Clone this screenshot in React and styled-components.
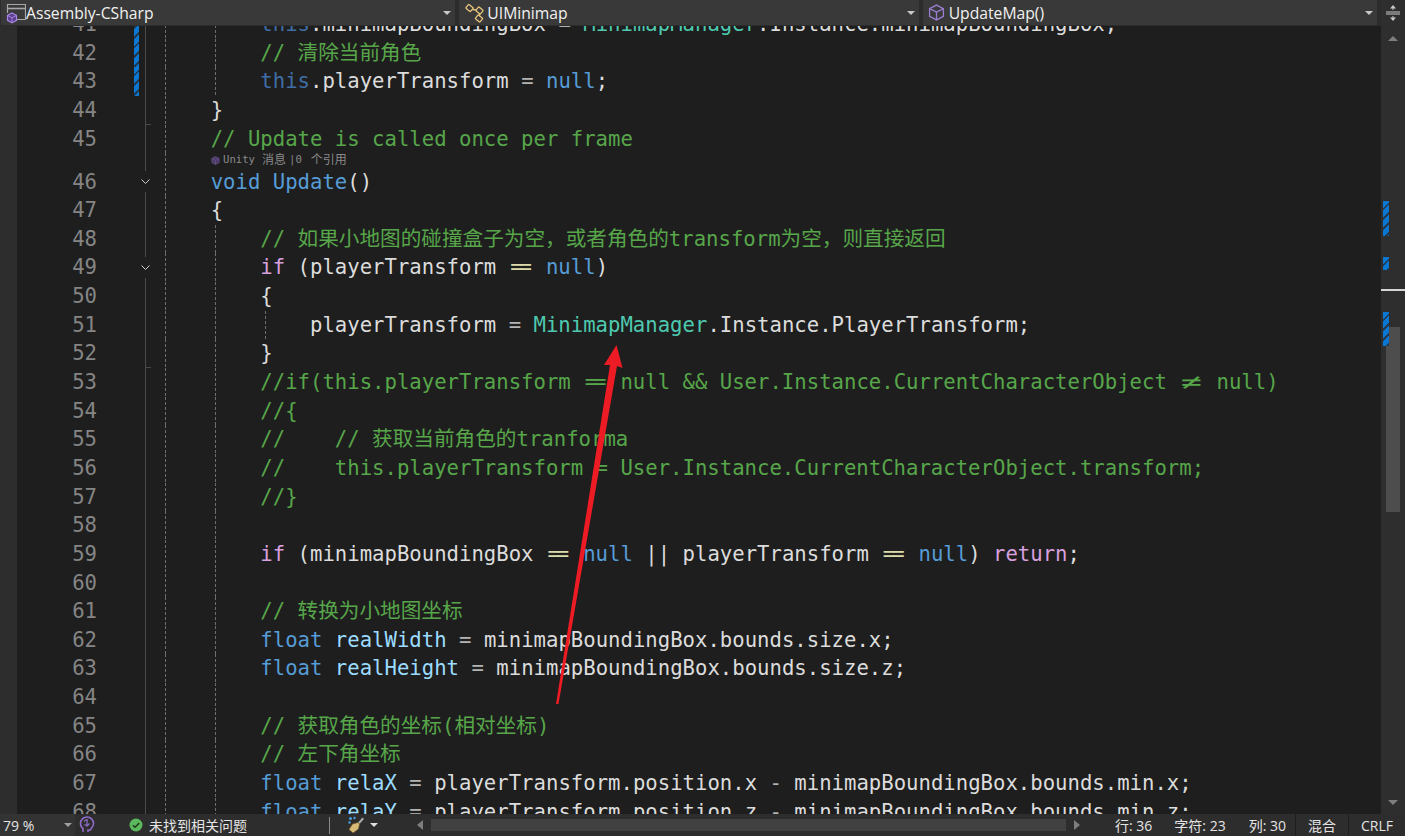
import styled, { createGlobalStyle } from "styled-components";

const GlobalStyle = createGlobalStyle`
  html, body {
    margin: 0;
    height: 100%;
    overflow: hidden;
    background: #1e1e1e;
  }
`;

const uiFont = `"Open Sans", "Noto Sans CJK SC", sans-serif`;
const codeFont = `"DejaVu Sans Mono", "Noto Sans CJK SC", monospace`;

const hatch = `repeating-linear-gradient(135deg, #0a78d2 0 5px, #1f3a52 5px 7px)`;

const tokenColors = {
  kw: "#569cd6",
  ctl: "#d8a0df",
  type: "#4ec9b0",
  local: "#9cdcfe",
  com: "#57a64a",
  fade: "#3f6ea6",
  op: "#b4b4b4",
  eq: "#dcdcaa",
  txt: "#dcdcdc",
  fn: "#569cd6",
};

const Page = styled.div`
  position: relative;
  display: flex;
  flex-direction: column;
  width: 100%;
  height: 100vh;
  background: #1e1e1e;
  color: #dcdcdc;
  font-family: ${uiFont};
`;

const TopBar = styled.div`
  display: flex;
  flex: none;
  height: 26px;
  gap: 4px;
  padding-left: 1px;
  background: #2c2c2c;
  box-sizing: border-box;
  border-bottom: 1px solid #2c2c2c;
`;

const Combo = styled.div`
  display: flex;
  align-items: center;
  width: ${({ $w }) => $w}px;
  gap: ${({ $gap }) => $gap}px;
  padding: 0 4px 0 ${({ $pl }) => $pl}px;
  box-sizing: border-box;
  background: #393939;
  font-size: 15.7px;
  color: #f1f1f1;
`;

const ComboLabel = styled.span`
  flex: 1;
  white-space: nowrap;
`;

const Caret = styled.span`
  flex: none;
  width: 0;
  height: 0;
  border-left: 4px solid transparent;
  border-right: 4px solid transparent;
  border-top: 4px solid ${({ $c }) => $c || "#c8c8c8"};
`;

const SplitBox = styled.div`
  flex: none;
  display: flex;
  align-items: center;
  justify-content: center;
  width: 24px;
  margin-left: auto;
  background: #2e2e2e;
`;

const Main = styled.div`
  flex: 1;
  min-height: 0;
  display: flex;
`;

const Editor = styled.div`
  flex: 1;
  min-width: 0;
  overflow: hidden;
`;

const Lines = styled.div`
  margin-top: -16px;
  font-family: ${codeFont};
  font-size: 20.63px;
  font-variant-ligatures: none;
`;

const Row = styled.div`
  display: grid;
  grid-template-columns: 17px 80px 37px 5px 22px 1fr;
  height: ${({ $lens }) => ($lens ? "14.35px" : "28.65px")};
  line-height: ${({ $lens }) => ($lens ? "14.35px" : "28.65px")};
`;

const GlyphMargin = styled.div`
  background: #2d2d2d;
`;

const LineNo = styled.div`
  text-align: right;
  color: #858585;
`;

const Spacer = styled.div``;

const ChangeBar = styled.div`
  background: ${({ $on }) => ($on ? hatch : "transparent")};
`;

const Outline = styled.div`
  position: relative;
  display: flex;
  align-items: center;

  &::before {
    content: "";
    position: absolute;
    left: 6px;
    top: 0;
    bottom: 0;
    width: 1px;
    background: #4a4a4a;
  }

  &::after {
    content: "";
    display: ${({ $end }) => ($end ? "block" : "none")};
    position: absolute;
    left: 6px;
    bottom: 0;
    width: 6px;
    height: 1px;
    background: #4a4a4a;
  }
`;

const Fold = styled.svg`
  position: relative;
  margin-left: 1px;
  padding: 4px 0;
  background: #1e1e1e;
`;

const Code = styled.div`
  position: relative;
  white-space: pre;
`;

const Guide = styled.span`
  position: absolute;
  left: ${({ $level }) => 4 + $level * 50}px;
  top: 0;
  bottom: 0;
  width: 1px;
  background: repeating-linear-gradient(to bottom, #6e6e6e 0 3px, transparent 3px 5px);
`;

const T = styled.span`
  color: ${({ $k }) => tokenColors[$k]};
`;

const LongEq = styled.span`
  display: inline-block;
  width: 24.84px;
  text-align: center;
  letter-spacing: -3px;
  text-indent: -3px;
  color: ${({ $k }) => tokenColors[$k]};
`;

const NotEq = styled.span`
  display: inline-block;
  width: 24.84px;
  text-align: center;
  transform: scaleX(1.7);
  color: ${({ $k }) => tokenColors[$k]};
`;

const Lens = styled.div`
  display: flex;
  align-items: center;
  height: 100%;
  padding-left: 50px;
  font-size: 10.65px;
  color: #8a8a8a;
`;

const LensText = styled.span`
  margin-left: ${({ $ml }) => $ml}px;
  white-space: pre;
`;

const LensCjk = styled.span`
  margin-left: ${({ $ml }) => $ml}px;
  font-size: 12px;
`;

const Scroll = styled.div`
  position: relative;
  flex: none;
  display: flex;
  flex-direction: column;
  align-items: center;
  justify-content: space-between;
  width: 24px;
  padding: 10px 0 9px;
  box-sizing: border-box;
  background: #2e2e2e;
`;

const ArrowUp = styled.span`
  width: 0;
  height: 0;
  border-left: 5px solid transparent;
  border-right: 5px solid transparent;
  border-bottom: 5px solid #7e7e7e;
`;

const ArrowDown = styled.span`
  width: 0;
  height: 0;
  border-left: 5px solid transparent;
  border-right: 5px solid transparent;
  border-top: 5px solid #7e7e7e;
`;

const Thumb = styled.div`
  position: absolute;
  left: 5px;
  top: 301px;
  width: 14px;
  height: 185px;
  background: #4d4d4d;
`;

const Mark = styled.div`
  position: absolute;
  left: 2px;
  top: ${({ $top }) => $top}px;
  width: 6px;
  height: ${({ $h }) => $h}px;
  background: ${hatch};
`;

const CaretLine = styled.div`
  position: absolute;
  left: 0;
  right: 0;
  top: 263px;
  height: 2px;
  background: #d6d6d6;
`;

const StatusBar = styled.div`
  flex: none;
  display: flex;
  align-items: center;
  height: 22px;
  background: #2d2d2d;
  font-size: 14px;
  color: #e4e4e4;
`;

const ZoomBox = styled.div`
  display: flex;
  align-items: center;
  justify-content: space-between;
  width: 75px;
  height: 100%;
  padding: 0 3px;
  box-sizing: border-box;
  background: #333333;
`;

const StatusIcon = styled.svg`
  flex: none;
  margin-left: ${({ $ml }) => $ml || 0}px;
`;

const Health = styled.span`
  margin-left: 6px;
  white-space: nowrap;
`;

const Divider = styled.div`
  width: 1px;
  height: 17px;
  margin-left: 82px;
  background: #8a8a8a;
`;

const BrushCaret = styled.span`
  margin-left: 5px;
`;

const BlockCaret = styled(Caret)`
  display: block;
`;

const HScroll = styled.div`
  display: flex;
  align-items: center;
  gap: 8px;
  width: 663px;
  margin-left: 39px;
  height: 100%;
`;

const HTrack = styled.div`
  flex: 1;
  height: 12px;
  background: #414141;
`;

const ArrowLeft = styled.span`
  flex: none;
  border-top: 5px solid transparent;
  border-bottom: 5px solid transparent;
  border-right: 6px solid #7e7e7e;
`;

const ArrowRight = styled.span`
  flex: none;
  border-top: 5px solid transparent;
  border-bottom: 5px solid transparent;
  border-left: 6px solid #7e7e7e;
`;

const Pos = styled.span`
  white-space: nowrap;
  margin-left: ${({ $ml }) => $ml}px;
`;

const StatusCells = styled.div`
  display: flex;
  height: 100%;
  margin-left: auto;
`;

const StatusCell = styled.div`
  display: flex;
  align-items: center;
  justify-content: center;
  width: ${({ $w }) => $w}px;
  border-left: 1px solid #1e1e1e;
  box-sizing: border-box;
`;

const Annotation = styled.svg`
  position: absolute;
  left: 0;
  top: 0;
  pointer-events: none;
`;

const Cube = ({ size = 16, color = "#9a7fd0", fill = "none" }) => (
  <svg width={size} height={size} viewBox="0 0 16 16" fill={fill} stroke={color} strokeWidth="1.2" style={{ flex: "none" }}>
    <path d="M8 1 14.5 4.3v7.4L8 15 1.5 11.7V4.3z" />
    <path d="M1.5 4.3 8 7.6l6.5-3.3M8 7.6V15" />
  </svg>
);

const AssemblyIcon = () => (
  <svg width="22" height="22" viewBox="0 0 22 22" fill="none" style={{ flex: "none" }}>
    <path d="M3.5 11V2.5h18v15H12" stroke="#a8a8a8" strokeWidth="1.2" />
    <path d="M3.5 6.5h18" stroke="#a8a8a8" strokeWidth="1.6" />
    <path d="M8 11l4.5 2.4v5L8 20.8l-4.5-2.4v-5z" fill="#5a3e8c" stroke="#a583e0" strokeWidth="1.2" />
    <path d="M3.5 13.4 8 15.8l4.5-2.4M8 15.8v5" stroke="#a583e0" strokeWidth="1" />
  </svg>
);

const ClassIcon = () => (
  <svg width="20" height="20" viewBox="0 0 20 20" fill="none" stroke="#e8c47c" strokeWidth="1.3" style={{ flex: "none" }}>
    <rect x="-3" y="-2.4" width="6" height="4.8" rx="0.8" transform="translate(4.5 5) rotate(40)" />
    <rect x="-3" y="-2.4" width="6" height="4.8" rx="0.8" transform="translate(14.5 7.500) rotate(40)" />
    <rect x="-3" y="-2.4" width="6" height="4.8" rx="0.8" transform="translate(14 15.500) rotate(40)" />
    <path d="M7.500 6.500 11.500 7M14.500 10.500v2" />
  </svg>
);

const SplitIcon = () => (
  <svg width="16" height="16" viewBox="0 0 16 16" fill="#c8c8c8">
    <path d="M1 6.500h14v1H1zM1 8.500h14v1H1zM8 0l3 3.500H5zM8 16l-3-3.500h6z" />
    <path d="M7.500 3h1v2h-1zM7.500 11h1v2h-1z" />
  </svg>
);

const BrainIcon = () => (
  <StatusIcon $ml={4} width="16" height="18" viewBox="0 0 16 18" fill="none" stroke="#8f6cc9" strokeWidth="1.6">
    <path d="M4 16v-3.500C2.500 11.500 1.500 9.500 1.500 7.500a6.500 6.500 0 0 1 13 0c0 2-.7 3.500-2 4.500l-1 2H9v2" />
    <path d="M5 5.500c1-1.500 2.500-2 4-1.500M8 4v6M5.500 8.500 8 10l2.500-2.500" strokeWidth="1.2" />
  </StatusIcon>
);

const CheckIcon = () => (
  <StatusIcon $ml={34} width="14" height="14" viewBox="0 0 14 14" fill="none">
    <circle cx="7" cy="7" r="6.500" fill="#5cb85c" />
    <path d="M3.800 7.200 6 9.300l4.200-4.200" stroke="#1e3d1e" strokeWidth="1.500" />
  </StatusIcon>
);

const BrushIcon = () => (
  <StatusIcon $ml={17} width="18" height="18" viewBox="0 0 18 18" fill="none">
    <circle cx="3.500" cy="2.500" r="1.500" fill="#4a9fe0" />
    <circle cx="7.500" cy="2" r="1.200" fill="#4a9fe0" />
    <circle cx="2.500" cy="6.500" r="1.200" fill="#4a9fe0" />
    <path d="M11 6.500 15.500 1.500 17 3l-4.500 5z" fill="#a8a8a8" />
    <path d="M5.500 8 11 6.500 12.500 8 11.500 13 6 17 2 13.500z" fill="#d8bc78" stroke="#6e5a2c" strokeWidth="0.8" />
  </StatusIcon>
);

const FoldMark = () => (
  <Fold width="11" height="13" viewBox="0 0 11 5" fill="none" stroke="#cfcfcf" strokeWidth="1">
    <path d="M1.500 .5 5.500 4.500 9.500 .5" />
  </Fold>
);

const line = (n, level, tokens, opts = {}) => ({ n, level, tokens, ...opts });
const t = (k, s) => [k, s];
const com = (s) => [t("com", s)];

const rows = [
  line(41, 2, [t("fade", "        this"), t("txt", ".minimapBoundingBox "), t("op", "= "), t("type", "MinimapManager"), t("txt", ".Instance.minimapBoundingBox;")], { changed: true }),
  line(42, 2, [t("com", "        // 清除当前角色")], { changed: true }),
  line(43, 2, [t("fade", "        this"), t("txt", ".playerTransform "), t("op", "= "), t("kw", "null"), t("txt", ";")], { changed: true }),
  line(44, 1, [t("txt", "    }")], { end: true }),
  line(45, 1, [t("com", "    // Update is called once per frame")]),
  { lens: true },
  line(46, 1, [t("kw", "    void "), t("fn", "Update"), t("txt", "()")], { fold: true }),
  line(47, 1, [t("txt", "    {")]),
  line(48, 2, [t("com", "        // 如果小地图的碰撞盒子为空，或者角色的transform为空，则直接返回")]),
  line(49, 2, [t("ctl", "        if"), t("txt", " (playerTransform "), ["long", "=="], t("txt", " "), t("kw", "null"), t("txt", ")")], { fold: true }),
  line(50, 2, [t("txt", "        {")]),
  line(51, 3, [t("txt", "            playerTransform "), t("op", "= "), t("type", "MinimapManager"), t("txt", ".Instance.PlayerTransform;")]),
  line(52, 2, [t("txt", "        }")], { end: true }),
  line(53, 2, [t("com", "        //if(this.playerTransform "), ["longCom", "=="], t("com", " null && User.Instance.CurrentCharacterObject "), ["ne", "≠"], t("com", " null)")]),
  line(54, 2, com("        //{")),
  line(55, 2, com("        //    // 获取当前角色的tranforma")),
  line(56, 2, com("        //    this.playerTransform = User.Instance.CurrentCharacterObject.transform;")),
  line(57, 2, com("        //}")),
  line(58, 2, []),
  line(59, 2, [t("ctl", "        if"), t("txt", " (minimapBoundingBox "), ["long", "=="], t("txt", " "), t("kw", "null"), t("txt", " || playerTransform "), ["long", "=="], t("txt", " "), t("kw", "null"), t("txt", ") "), t("ctl", "return"), t("txt", ";")]),
  line(60, 2, []),
  line(61, 2, com("        // 转换为小地图坐标")),
  line(62, 2, [t("kw", "        float "), t("local", "realWidth"), t("op", " = "), t("txt", "minimapBoundingBox.bounds.size.x;")]),
  line(63, 2, [t("kw", "        float "), t("local", "realHeight"), t("op", " = "), t("txt", "minimapBoundingBox.bounds.size.z;")]),
  line(64, 2, []),
  line(65, 2, com("        // 获取角色的坐标(相对坐标)")),
  line(66, 2, com("        // 左下角坐标")),
  line(67, 2, [t("kw", "        float "), t("local", "relaX"), t("op", " = "), t("txt", "playerTransform.position.x "), t("op", "- "), t("txt", "minimapBoundingBox.bounds.min.x;")]),
  line(68, 2, [t("kw", "        float "), t("local", "relaY"), t("op", " = "), t("txt", "playerTransform.position.z "), t("op", "- "), t("txt", "minimapBoundingBox.bounds.min.z;")]),
];

function Token({ kind, text }) {
  if (kind === "long") return <LongEq $k="eq">{text}</LongEq>;
  if (kind === "longCom") return <LongEq $k="com">{text}</LongEq>;
  if (kind === "ne") return <NotEq $k="com">{text}</NotEq>;
  return <T $k={kind}>{text}</T>;
}

function CodeRow({ row }) {
  if (row.lens) {
    return (
      <Row $lens>
        <GlyphMargin />
        <LineNo />
        <Spacer />
        <ChangeBar />
        <Outline />
        <Code>
          <Guide $level={0} />
          <Lens>
            <Cube size={9} color="#6d5a8e" fill="#4b3a66" />
            <LensText $ml={3}>Unity</LensText>
            <LensCjk $ml={7}>消息</LensCjk>
            <LensText $ml={3}>|0</LensText>
            <LensCjk $ml={9}>个引用</LensCjk>
          </Lens>
        </Code>
      </Row>
    );
  }
  return (
    <Row>
      <GlyphMargin />
      <LineNo>{row.n}</LineNo>
      <Spacer />
      <ChangeBar $on={row.changed} />
      <Outline $end={row.end}>{row.fold && <FoldMark />}</Outline>
      <Code>
        {Array.from({ length: row.level }, (_, i) => (
          <Guide key={i} $level={i} />
        ))}
        {row.tokens.map(([kind, text], i) => (
          <Token key={i} kind={kind} text={text} />
        ))}
      </Code>
    </Row>
  );
}

export default function App() {
  return (
    <Page>
      <GlobalStyle />
      <TopBar>
        <Combo $w={455} $pl={3} $gap={0}>
          <AssemblyIcon />
          <ComboLabel>Assembly-CSharp</ComboLabel>
          <Caret />
        </Combo>
        <Combo $w={460} $pl={6} $gap={2}>
          <ClassIcon />
          <ComboLabel>UIMinimap</ComboLabel>
          <Caret />
        </Combo>
        <Combo $w={455} $pl={5} $gap={4}>
          <Cube size={17} />
          <ComboLabel>UpdateMap()</ComboLabel>
          <Caret />
        </Combo>
        <SplitBox>
          <SplitIcon />
        </SplitBox>
      </TopBar>
      <Main>
        <Editor>
          <Lines>
            {rows.map((row, i) => (
              <CodeRow key={i} row={row} />
            ))}
          </Lines>
        </Editor>
        <Scroll>
          <ArrowUp />
          <Thumb />
          <Mark $top={175} $h={35} />
          <Mark $top={231} $h={13} />
          <CaretLine />
          <Mark $top={286} $h={34} />
          <ArrowDown />
        </Scroll>
      </Main>
      <StatusBar>
        <ZoomBox>
          79 %
          <Caret $c="#a0a0a0" />
        </ZoomBox>
        <BrainIcon />
        <CheckIcon />
        <Health>未找到相关问题</Health>
        <Divider />
        <BrushIcon />
        <BrushCaret>
          <BlockCaret $c="#e0e0e0" />
        </BrushCaret>
        <HScroll>
          <ArrowLeft />
          <HTrack />
          <ArrowRight />
        </HScroll>
        <Pos $ml={35}>行: 36</Pos>
        <Pos $ml={22}>字符: 23</Pos>
        <Pos $ml={23}>列: 30</Pos>
        <StatusCells>
          <StatusCell $w={53}>混合</StatusCell>
          <StatusCell $w={57}>CRLF</StatusCell>
        </StatusCells>
      </StatusBar>
      <Annotation width="1405" height="836" viewBox="0 0 1405 836">
        <polygon points="556,704 610,365 604,365 616.500,345 622.500,368 617,366 558.500,704" fill="#ed1c24" />
      </Annotation>
    </Page>
  );
}
